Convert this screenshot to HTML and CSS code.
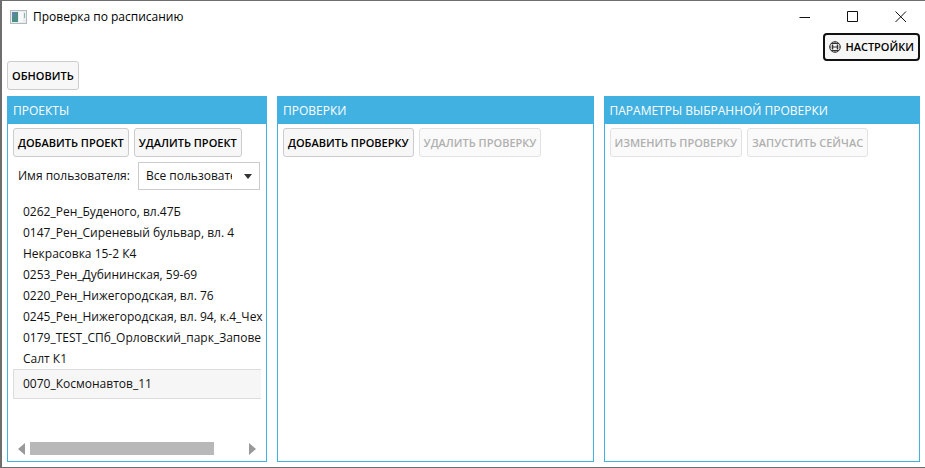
FILE: index.html
```html
<!DOCTYPE html>
<html lang="ru">
<head>
<meta charset="utf-8">
<title>Проверка по расписанию</title>
<link rel="stylesheet" href="styles.css">
</head>
<body>
<div class="window">
  <header class="titlebar">
    <svg class="app-icon" width="17" height="14" viewBox="0 0 17 14" aria-hidden="true">
      <rect x="0.5" y="0.5" width="16" height="13" fill="#e9edf0" stroke="#b3b8bd"/>
      <rect x="2" y="2" width="6" height="10" fill="#4b8f86"/>
      <rect x="2" y="2" width="3" height="5" fill="#5a86ad"/>
      <rect x="9" y="2" width="4" height="10" fill="#f7f8f9"/>
      <rect x="14" y="3" width="1" height="5" fill="#8fb3a6"/>
    </svg>
    <h1 class="title">Проверка по расписанию</h1>
    <div class="window-controls">
      <button class="window-button" aria-label="Свернуть"><svg width="12" height="12" viewBox="0 0 12 12"><path d="M0.500 6.500H11"/></svg></button>
      <button class="window-button" aria-label="Развернуть"><svg width="12" height="12" viewBox="0 0 12 12"><path d="M0.500 0.500H10.500V10.500H0.500Z"/></svg></button>
      <button class="window-button" aria-label="Закрыть"><svg width="12" height="12" viewBox="0 0 12 12"><path d="M0.500 0.500L11 11M11 0.500L0.500 11"/></svg></button>
    </div>
  </header>
  <div class="settings-row">
    <button class="button button-focused">
      <svg width="12" height="12" viewBox="0 0 12 12" aria-hidden="true" fill="none" stroke="#333" stroke-width="1">
        <circle cx="6" cy="6" r="5.300"/>
        <path d="M2 2.500H10M2 9.500H10M3.500 6H8.500"/>
        <path stroke-width="1.500" d="M3.500 3.500V8.500M8.500 3.500V8.500"/>
        <path d="M0.700 6H2M10 6H11.300M6 0.700V2.500M6 9.500V11.300"/>
      </svg>
      НАСТРОЙКИ
    </button>
  </div>
  <div class="refresh-row">
    <button class="button">ОБНОВИТЬ</button>
  </div>
  <main class="panels">
    <section class="panel">
      <h2 class="panel-title">ПРОЕКТЫ</h2>
      <div class="toolbar">
        <button class="button">ДОБАВИТЬ ПРОЕКТ</button>
        <button class="button">УДАЛИТЬ ПРОЕКТ</button>
      </div>
      <div class="filter">
        <label for="user">Имя пользователя:</label>
        <div class="select-box">
          <select id="user"><option>Все пользователи</option></select>
          <svg class="chevron" width="8" height="5" viewBox="0 0 8 5" aria-hidden="true"><path d="M0 0H8L4 5Z"/></svg>
        </div>
      </div>
      <ul class="projects">
        <li>0262_Рен_Буденого, вл.47Б</li>
        <li>0147_Рен_Сиреневый бульвар, вл. 4</li>
        <li>Некрасовка 15-2 К4</li>
        <li>0253_Рен_Дубининская, 59-69</li>
        <li>0220_Рен_Нижегородская, вл. 76</li>
        <li>0245_Рен_Нижегородская, вл. 94, к.4_Чех</li>
        <li>0179_TEST_СПб_Орловский_парк_Запове</li>
        <li>Салт К1</li>
        <li class="selected">0070_Космонавтов_11</li>
      </ul>
      <div class="scrollbar">
        <button class="scroll-arrow" aria-label="Влево"><svg width="7" height="12" viewBox="0 0 7 12"><path d="M7 0V12L0 6Z"/></svg></button>
        <div class="scroll-track"><div class="scroll-thumb"></div></div>
        <button class="scroll-arrow" aria-label="Вправо"><svg width="7" height="12" viewBox="0 0 7 12"><path d="M0 0V12L7 6Z"/></svg></button>
      </div>
    </section>
    <section class="panel">
      <h2 class="panel-title">ПРОВЕРКИ</h2>
      <div class="toolbar">
        <button class="button">ДОБАВИТЬ ПРОВЕРКУ</button>
        <button class="button" disabled>УДАЛИТЬ ПРОВЕРКУ</button>
      </div>
    </section>
    <section class="panel">
      <h2 class="panel-title">ПАРАМЕТРЫ ВЫБРАННОЙ ПРОВЕРКИ</h2>
      <div class="toolbar">
        <button class="button" disabled>ИЗМЕНИТЬ ПРОВЕРКУ</button>
        <button class="button" disabled>ЗАПУСТИТЬ СЕЙЧАС</button>
      </div>
    </section>
  </main>
</div>
</body>
</html>
```
FILE: styles.css
```css
* {
  box-sizing: border-box;
}

body {
  margin: 0;
  background: #fff;
  color: #111;
  font: 12px/16px "Open Sans", "Noto Sans", sans-serif;
}

button,
select {
  font: inherit;
  color: inherit;
}

.window {
  display: flex;
  flex-direction: column;
  min-height: 100vh;
  padding: 0 5px 5px;
  border: 1px solid #6e6e6e;
  border-left-width: 2px;
  border-right: 0;
}

.titlebar {
  display: flex;
  align-items: center;
  height: 32px;
  padding-left: 3px;
}

.title {
  flex: 1;
  margin: 0 0 0 6px;
  font-size: 12px;
  font-weight: 400;
  color: #000;
}

.window-controls {
  display: flex;
  margin-right: -5px;
}

.window-button {
  display: flex;
  align-items: center;
  justify-content: center;
  width: 48px;
  height: 30px;
  padding: 0;
  border: 0;
  background: none;
}

.window-button svg {
  fill: none;
  stroke: #111;
}

.settings-row {
  display: flex;
  justify-content: flex-end;
}

.refresh-row {
  display: flex;
  margin-bottom: 6px;
}

.button {
  display: flex;
  align-items: center;
  gap: 4px;
  height: 29px;
  padding: 0 4px;
  border: 1px solid #ccc;
  border-radius: 3px;
  background: #f7f7f7;
  color: #000;
  font-size: 11px;
  font-weight: 600;
  white-space: nowrap;
}

.button:disabled {
  border-color: #e2e2e2;
  background: #fafafa;
  color: #b0b0b0;
}

.button-focused {
  height: 28px;
  border: 2px solid #111;
  border-radius: 4px;
}

.panels {
  display: grid;
  flex: 1;
  grid-template-columns: 260px 1fr 1fr;
  gap: 10px;
}

.panel {
  display: flex;
  flex-direction: column;
  min-width: 0;
  border: 1px solid #41b1e1;
}

.panel-title {
  margin: 0;
  padding: 6px 5px 5px;
  background: #41b1e1;
  color: #fff;
  font-size: 12px;
  font-weight: 400;
}

.toolbar {
  display: flex;
  gap: 5px;
  padding: 4px 5px 5px;
}

.filter {
  display: flex;
  align-items: center;
  gap: 8px;
  padding: 0 6px 0 10px;
}

.filter label {
  white-space: nowrap;
}

.select-box {
  display: grid;
  flex: 1;
  align-items: center;
  min-width: 0;
}

.select-box select,
.chevron {
  grid-area: 1 / 1;
}

.select-box select {
  width: 100%;
  height: 28px;
  padding: 0 27px 0 7px;
  border: 1px solid #ccc;
  border-radius: 0;
  background: #fff;
  appearance: none;
}

.chevron {
  justify-self: end;
  margin-right: 8px;
  fill: #333;
  pointer-events: none;
}

.projects {
  flex: 1;
  margin: 11px 3px 0 5px;
  padding: 0;
  overflow: hidden;
  list-style: none;
}

.projects li {
  padding: 0 0 0 10px;
  line-height: 21px;
  white-space: nowrap;
}

.projects .selected {
  margin-right: 2px;
  padding-left: 9px;
  border: 1px solid #dcdcdc;
  border-right: 0;
  background: #f6f6f6;
  line-height: 28px;
}

.scrollbar {
  display: flex;
  align-items: center;
  gap: 5px;
  padding: 0 10px 6px;
}

.scroll-arrow {
  display: flex;
  padding: 0;
  border: 0;
  background: none;
}

.scroll-arrow svg {
  fill: #999;
}

.scroll-track {
  flex: 1;
}

.scroll-thumb {
  width: 86%;
  height: 13px;
  background: #b8b8b8;
}
```
